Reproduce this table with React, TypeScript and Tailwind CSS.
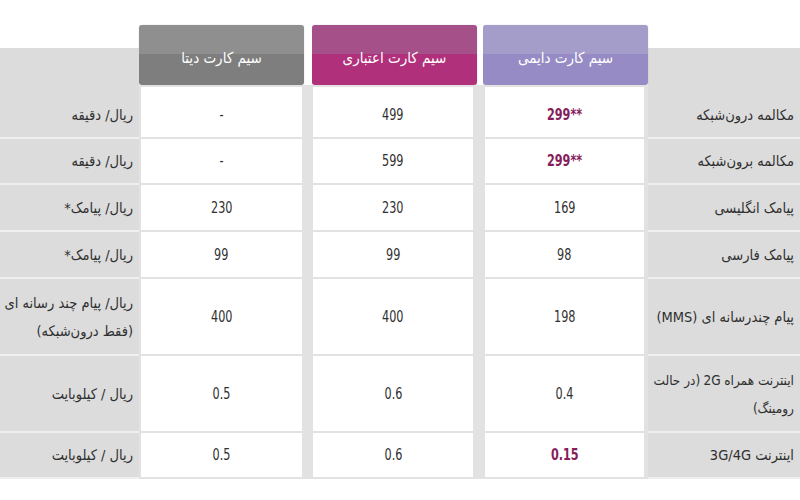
import React from "react";

type Row = {
  label: React.ReactNode;
  daemi: React.ReactNode;
  etebari: string;
  dita: string;
  unit: React.ReactNode;
  h: string;
  pt?: string;
  accent?: boolean;
  labelCls?: string;
};

const rows: Row[] = [
  { label: "مکالمه درون‌شبکه", daemi: "299**", etebari: "499", dita: "-", unit: "ریال/ دقیقه", h: "h-[52px]", pt: "pt-[6px]", accent: true },
  { label: "مکالمه برون‌شبکه", daemi: "299**", etebari: "599", dita: "-", unit: "ریال/ دقیقه", h: "h-[46px]", accent: true },
  { label: "پیامک انگلیسی", daemi: "169", etebari: "230", dita: "230", unit: "ریال/ پیامک*", h: "h-[47px]" },
  { label: "پیامک فارسی", daemi: "98", etebari: "99", dita: "99", unit: "ریال/ پیامک*", h: "h-[47px]" },
  {
    label: "پیام چندرسانه ای (MMS)",
    daemi: "198",
    etebari: "400",
    dita: "400",
    unit: (
      <>
        ریال/ پیام چند رسانه ای
        <br />
        (فقط درون‌شبکه)
      </>
    ),
    h: "h-[77px]",
  },
  {
    label: (
      <>
        اینترنت همراه 2G (در حالت
        <br />
        رومینگ)
      </>
    ),
    daemi: "0.4",
    etebari: "0.6",
    dita: "0.5",
    unit: "ریال / کیلوبایت",
    h: "h-[77px]",
    labelCls: "text-[13.5px] tracking-[-0.3px]",
  },
  { label: "اینترنت 3G/4G", daemi: "0.15", etebari: "0.6", dita: "0.5", unit: "ریال / کیلوبایت", h: "h-[46px]", accent: true },
];

const grid = "grid grid-cols-[152px_165px_6px_165px_8px_165px_139px]";

function Header({ text, cls }: { text: string; cls: string }) {
  return (
    <div className="flex flex-col">
      <div
        className={`h-[60px] rounded-[3px] flex items-center justify-center pt-[6px] text-white text-[15px] shadow-[0_0_1px_rgba(0,0,0,0.35)] ${cls}`}
      >
        {text}
      </div>
      <div className="h-[2px] bg-[#e2e2e2]" />
    </div>
  );
}

function Gap() {
  return (
    <div className="flex flex-col">
      <div className="h-[60px] bg-white" />
      <div className="h-[2px] bg-[#e2e2e2]" />
    </div>
  );
}

function Val({ v, pt, accent, pad }: { v: React.ReactNode; pt?: string; accent?: boolean; pad: string }) {
  return (
    <div className={`${pad} pb-[2px]`}>
      <div
        dir="ltr"
        className={`h-full bg-white flex items-center justify-center text-[16px] ${pt ?? ""} ${
          accent ? "font-bold text-[#861c5a]" : ""
        }`}
      >
        <span className="inline-block scale-x-[0.78]">{v}</span>
      </div>
    </div>
  );
}

export default function App() {
  return (
    <div
      dir="rtl"
      className="w-[800px] h-[500px] bg-white pt-[25px] text-[#2f2f2f] font-['DejaVu_Sans_Condensed','DejaVu_Sans',sans-serif] overflow-hidden"
    >
      <div className={`${grid} h-[62px]`}>
        <div className="mt-[23px] bg-[#dcdcdc]" />
        <Header text="سیم کارت دایمی" cls="bg-[linear-gradient(to_bottom,#a49dc9_48%,#968bc4_48%)]" />
        <Gap />
        <Header text="سیم کارت اعتباری" cls="bg-[linear-gradient(to_bottom,#a6508a_48%,#b0307c_48%)]" />
        <Gap />
        <Header text="سیم کارت دیتا" cls="bg-[linear-gradient(to_bottom,#8f8f8f_48%,#7e7e7e_48%)]" />
        <div className="mt-[23px] bg-[#dcdcdc]" />
      </div>
      {rows.map((r, i) => (
        <div key={i} className={`${grid} ${r.h} bg-[#e2e2e2]`}>
          <div
            className={`bg-[#dcdcdc] border-b-2 border-[#efefef] flex items-center pr-[6px] pl-[2px] leading-[28px] whitespace-nowrap ${r.labelCls ?? "text-[14.5px]"} ${r.pt ?? ""}`}
          >
            <div>{r.label}</div>
          </div>
          <Val v={r.daemi} pt={r.pt} accent={r.accent} pad="pr-[4px] pl-[2px]" />
          <div />
          <Val v={r.etebari} pt={r.pt} pad="pr-[4px] pl-[1px]" />
          <div />
          <Val v={r.dita} pt={r.pt} pad="px-[2px]" />
          <div
            className={`bg-[#dcdcdc] border-b-2 border-[#efefef] flex items-center pr-[6px] pl-[2px] text-[14.5px] leading-[28px] whitespace-nowrap ${r.pt ?? ""}`}
          >
            <div>{r.unit}</div>
          </div>
        </div>
      ))}
    </div>
  );
}
